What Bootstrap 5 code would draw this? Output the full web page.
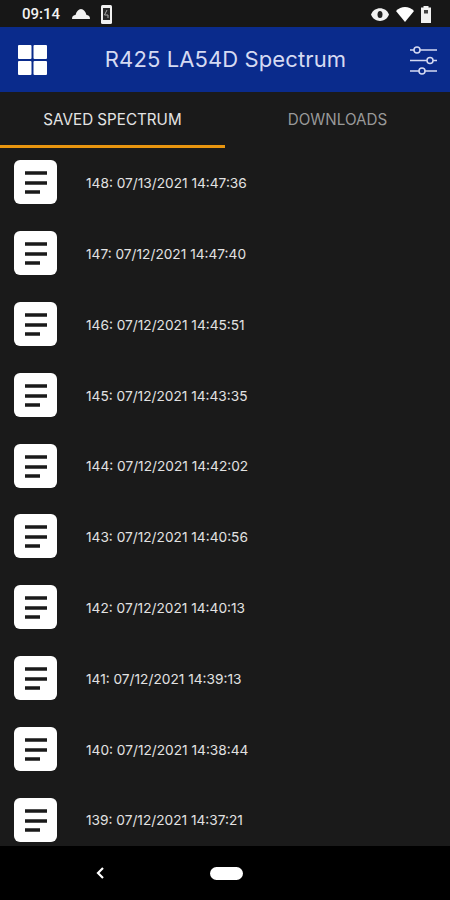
<!DOCTYPE html>
<html>
<head>
  <meta charset="UTF-8" />
  <title>R425 LA54D Spectrum</title>
  <link rel="stylesheet" href="https://cdn.jsdelivr.net/npm/bootstrap@5.3.0/dist/css/bootstrap.min.css" />
  <style>
    body { width: 450px; height: 900px; overflow: hidden; background: #1a1a1a; font-family: "Inter", "Liberation Sans", sans-serif; }
    .status-strip { height: 27px; background: #171717; color: #f2f2f2; padding: 1px 19px 0 22px; font-family: "Roboto", sans-serif; font-size: 15px; font-weight: 500; }
    .st-cloud { margin-left: 12px; }
    .st-device { margin-left: 11px; }
    .st-wifi { margin-left: 7px; }
    .app-head { height: 65px; background: #0a2b8c; padding: 0 13px 0 18px; }
    .app-title { color: #d5daf2; font-size: 22px; letter-spacing: .1px; margin-right: 6px; font-family: "Inter", sans-serif; }
    .tab-strip { height: 56px; background: #1a1a1a; }
    .tab-item { width: 225px; font-size: 15.2px; }
    .tab-on { color: #e4e4e4; border-bottom: 3px solid #e8950f; padding-top: 3px; }
    .tab-off { color: #999; }
    .file-list { height: 698px; overflow: hidden; }
    .file-row { height: 70.8px; padding-left: 14px; gap: 29px; flex-shrink: 0; color: #e2e2e2; font-size: 13.7px; }
    .doc-icon { margin-top: -2px; }
    .nav-strip { height: 54px; background: #000; }
    .nav-back { margin-left: 95px; }
    .nav-home { margin-left: 105px; }
  </style>
</head>
<body class="d-flex flex-column">
  <svg width="0" height="0" class="position-absolute">
    <symbol id="doc" viewBox="0 0 43 44">
      <rect width="43" height="44" rx="6" fill="#fff" />
      <path d="M11 13h22M11 23h22M11 32h15" stroke="#1a1a1a" stroke-width="3.4" />
    </symbol>
  </svg>

  <!-- status bar -->
  <div class="status-strip d-flex align-items-center flex-shrink-0">
    <span>09:14</span>
    <svg class="st-cloud" width="18" height="10" viewBox="0 0 18 10"><path d="M0 10c0-3 1.500-4 3.500-4 1-3.500 3-6 5.500-6s4.500 2.500 5.500 6c2 0 3.500 1 3.500 4z" fill="#f2f2f2" /></svg>
    <svg class="st-device" width="11" height="19" viewBox="0 0 11 19"><rect width="11" height="19" rx="1.500" fill="#f2f2f2" /><rect x="2" y="3" width="7" height="12" fill="#2a2a2a" /><path d="M6 5 3.500 10H7V13" fill="none" stroke="#aaa" /></svg>
    <svg class="ms-auto" width="18" height="13" viewBox="0 0 18 13"><path d="M0 6.500c3-8.500 15-8.500 18 0-3 8.500-15 8.500-18 0z" fill="#f2f2f2" /><ellipse cx="9" cy="6.500" rx="2.500" ry="3.500" fill="#222" /></svg>
    <svg class="st-wifi" width="18" height="15" viewBox="0 0 18 15"><path d="M0 4c5-5.300 13-5.300 18 0L9 15z" fill="#fff" /></svg>
    <svg class="st-wifi" width="10" height="17" viewBox="0 0 10 17"><path d="M2.500 1.500V0h5v1.500H10V17H0V1.500z" fill="#f2f2f2" /><rect x="3" y="4" width="4" height="3.500" fill="#444" /></svg>
  </div>

  <!-- app header -->
  <div class="app-head d-flex align-items-center justify-content-between flex-shrink-0">
    <svg width="29" height="30" viewBox="0 0 29 30">
      <rect width="13.500" height="14" rx="1" fill="#fff" />
      <rect x="15.500" width="13.500" height="14" rx="1" fill="#fff" />
      <rect y="16" width="13.500" height="14" rx="1" fill="#fff" />
      <rect x="15.500" y="16" width="13.500" height="14" rx="1" fill="#fff" />
    </svg>
    <span class="app-title">R425 LA54D Spectrum</span>
    <svg width="27" height="30" viewBox="0 0 27 30" fill="none" stroke="#d5daf2" stroke-width="1.500">
      <path d="M0 5h4M10 5h17M0 15.500h17M23 15.500h4M0 26h9M15 26h12" />
      <circle cx="7" cy="5" r="3" />
      <circle cx="20" cy="15.500" r="3" />
      <circle cx="12" cy="26" r="3" />
    </svg>
  </div>

  <!-- tabs -->
  <div class="tab-strip d-flex flex-shrink-0">
    <div class="tab-item tab-on d-flex align-items-center justify-content-center">SAVED SPECTRUM</div>
    <div class="tab-item tab-off d-flex align-items-center justify-content-center">DOWNLOADS</div>
  </div>

  <!-- saved files -->
  <div class="file-list d-flex flex-column flex-shrink-0" id="fileList"></div>

  <!-- android nav -->
  <div class="nav-strip d-flex align-items-center flex-shrink-0">
    <svg class="nav-back" width="10" height="14" viewBox="0 0 10 14"><path d="M8 2 3 7l5 5" fill="none" stroke="#fff" stroke-width="2.200" /></svg>
    <svg class="nav-home" width="33" height="13" viewBox="0 0 33 13"><rect width="33" height="13" rx="6.500" fill="#fff" /></svg>
  </div>

  <script src="https://cdn.jsdelivr.net/npm/bootstrap@5.3.0/dist/js/bootstrap.bundle.min.js"></script>
  <script>
    const files = [
      "148: 07/13/2021 14:47:36",
      "147: 07/12/2021 14:47:40",
      "146: 07/12/2021 14:45:51",
      "145: 07/12/2021 14:43:35",
      "144: 07/12/2021 14:42:02",
      "143: 07/12/2021 14:40:56",
      "142: 07/12/2021 14:40:13",
      "141: 07/12/2021 14:39:13",
      "140: 07/12/2021 14:38:44",
      "139: 07/12/2021 14:37:21"
    ];
    const list = document.getElementById("fileList");
    files.forEach((name) => {
      const row = document.createElement("div");
      row.className = "file-row d-flex align-items-center";
      row.innerHTML = `<svg class="doc-icon" width="43" height="44"><use href="#doc" /></svg><span>${name}</span>`;
      list.appendChild(row);
    });
  </script>
</body>
</html>
